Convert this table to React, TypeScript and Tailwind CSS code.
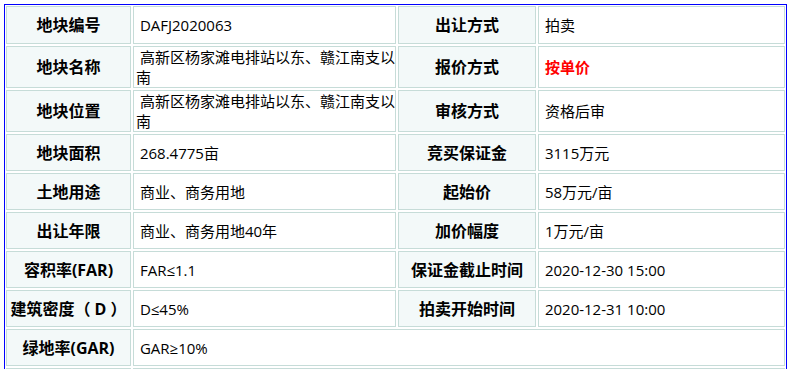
import type { ReactNode } from 'react';

function Label({ children, tall }: { children?: ReactNode; tall?: boolean }) {
  return (
    <div
      className={`flex items-center justify-center border border-[#c6dcd8] bg-[#f3f9f9] text-[16px] font-bold leading-[20px] text-black whitespace-pre ${
        tall ? 'h-[38px]' : 'min-h-[37px]'
      }`}
    >
      {children}
    </div>
  );
}

function Value({ children, wide, red }: { children?: ReactNode; wide?: boolean; red?: boolean }) {
  return (
    <div
      className={`flex items-center border border-[#c6dcd8] bg-white pl-[2px] text-[15px] leading-[20px] whitespace-nowrap ${
        wide ? 'col-span-3' : ''
      } ${red ? 'font-bold text-[#ff0000]' : 'text-black'}`}
    >
      <div>{children}</div>
    </div>
  );
}

export default function App() {
  const nb = '\u00a0';

  return (
    <div className="min-h-screen bg-white pt-[4px] pl-[4px] font-['Open_Sans','Noto_Sans_CJK_SC',sans-serif]">
      <div className="grid w-[783px] grid-cols-[125px_263px_138px_247px] gap-[2px] border border-[#0000ff] p-[1px]">
        <Label tall>地块编号</Label>
        <Value>{nb}DAFJ2020063</Value>
        <Label tall>出让方式</Label>
        <Value>{nb}拍卖</Value>

        <Label>地块名称</Label>
        <Value>
          {nb}高新区杨家滩电排站以东、赣江南支以
          <br />
          南
        </Value>
        <Label>报价方式</Label>
        <Value red>{nb}按单价</Value>

        <Label>地块位置</Label>
        <Value>
          {nb}高新区杨家滩电排站以东、赣江南支以
          <br />
          南
        </Value>
        <Label>审核方式</Label>
        <Value>{nb}资格后审</Value>

        <Label>地块面积</Label>
        <Value>{nb}268.4775亩</Value>
        <Label>竞买保证金</Label>
        <Value>{nb}3115万元</Value>

        <Label>土地用途</Label>
        <Value>{nb}商业、商务用地</Value>
        <Label>起始价</Label>
        <Value>{nb}58万元/亩</Value>

        <Label>出让年限</Label>
        <Value>{nb}商业、商务用地40年</Value>
        <Label>加价幅度</Label>
        <Value>{nb}1万元/亩</Value>

        <Label>容积率(FAR)</Label>
        <Value>{nb}FAR≤1.1</Value>
        <Label>保证金截止时间</Label>
        <Value>{nb}2020-12-30 15:00</Value>

        <Label>建筑密度（ D ）</Label>
        <Value>{nb}D≤45%</Value>
        <Label>拍卖开始时间</Label>
        <Value>{nb}2020-12-31 10:00</Value>

        <Label>绿地率(GAR)</Label>
        <Value wide>{nb}GAR≥10%</Value>

        <Label />
        <Value wide />
      </div>
    </div>
  );
}
